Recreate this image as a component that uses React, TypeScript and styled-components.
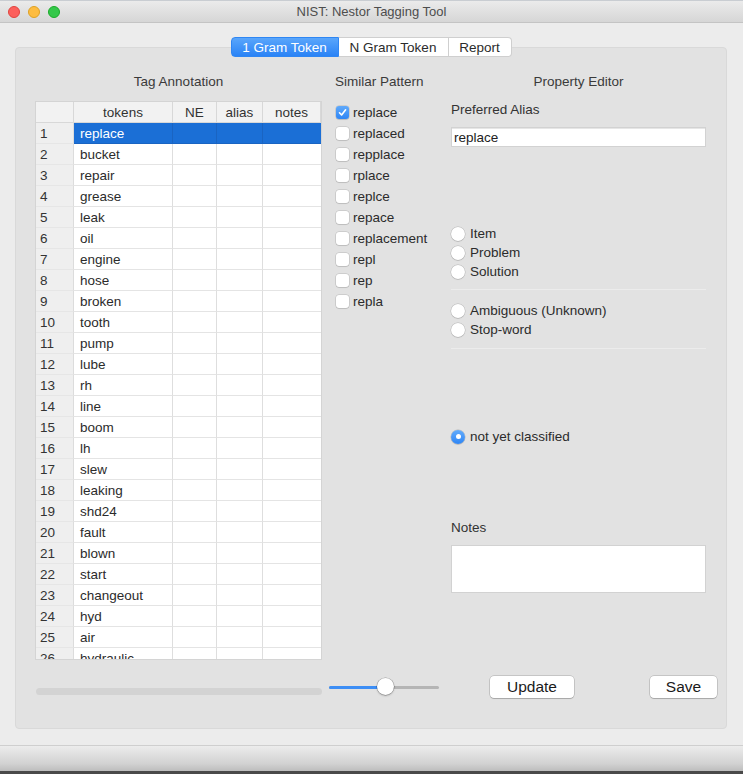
import React from "react";
import styled, { createGlobalStyle, css } from "styled-components";

const GlobalStyle = createGlobalStyle`
  html, body { margin: 0; padding: 0; background: #ececec; }
  body { font-family: "Liberation Sans", Arial, sans-serif; font-size: 13.5px; color: #2b2b2b; }
  * { box-sizing: border-box; }
`;

const Window = styled.div`
  width: 743px;
  height: 774px;
  display: flex;
  flex-direction: column;
  background: #ececec;
  overflow: hidden;
`;

const TitleBar = styled.div`
  height: 23px;
  flex: none;
  display: flex;
  align-items: center;
  position: relative;
  background: linear-gradient(#ebebeb, #d6d6d6);
  border-top: 1px solid #c9cdd2;
  border-bottom: 1px solid #c4c4c4;
`;

const Lights = styled.div`
  display: flex;
  gap: 8px;
  padding-left: 8px;
`;

const Light = styled.span<{ $c: string; $b: string }>`
  width: 12px;
  height: 12px;
  border-radius: 50%;
  background: ${(p) => p.$c};
  border: 1px solid ${(p) => p.$b};
`;

const Title = styled.div`
  position: absolute;
  left: 0;
  right: 0;
  text-align: center;
  font-size: 13px;
  color: #4d4d4d;
  pointer-events: none;
`;

const Body = styled.div`
  flex: 1;
  padding: 14px 16px 16px 15px;
  display: flex;
  flex-direction: column;
`;

const TabBar = styled.div`
  display: flex;
  justify-content: center;
  margin-bottom: -10px;
  position: relative;
  z-index: 1;
`;

const Tab = styled.div<{ $active?: boolean; $w: number }>`
  width: ${(p) => p.$w}px;
  height: 20px;
  display: flex;
  align-items: center;
  justify-content: center;
  font-size: 13.5px;
  background: #fff;
  color: #2b2b2b;
  border: 1px solid #cfcfcf;
  border-left: none;
  &:first-child { border-radius: 4px 0 0 4px; border-left: 1px solid #cfcfcf; }
  &:last-child { border-radius: 0 4px 4px 0; }
  ${(p) =>
    p.$active &&
    css`
      background: linear-gradient(#5aa6fb, #2a83f6);
      color: #fff;
      border-color: #2f86f3 !important;
    `}
`;

const Pane = styled.div`
  height: 682px;
  background: #e2e2e2;
  border: 1px solid #d9d9d9;
  border-radius: 4px;
  padding: 26px 9px 30px 19px;
  display: flex;
  flex-direction: column;
`;

const Columns = styled.div`
  display: grid;
  grid-template-columns: 287px 105px 255px;
  column-gap: 12px;
  align-items: start;
  & > :nth-child(2) { margin-left: 1px; }
`;

const Column = styled.div`
  display: flex;
  flex-direction: column;
`;

const SectionTitle = styled.div<{ $center?: boolean }>`
  height: 16px;
  line-height: 16px;
  color: #3a3a3a;
  white-space: nowrap;
  text-align: ${(p) => (p.$center ? "center" : "left")};
`;

const Table = styled.div`
  margin-top: 11px;
  height: 559px;
  overflow: hidden;
  background: #fff;
  border: 1px solid #d4d4d4;
  display: grid;
  grid-template-columns: 38px 99px 44px 46px 58px;
  grid-auto-rows: 21px;
  align-content: start;
`;

const HeadCell = styled.div`
  background: #f2f2f2;
  border-right: 1px solid #d8d8d8;
  border-bottom: 1px solid #d8d8d8;
  display: flex;
  align-items: center;
  justify-content: center;
  color: #333;
  &:last-child { border-right: none; }
`;

const RowNum = styled.div`
  background: #efefef;
  border-right: 1px solid #dcdcdc;
  border-bottom: 1px solid #e6e6e6;
  display: flex;
  align-items: center;
  padding-left: 4px;
  color: #333;
`;

const Cell = styled.div<{ $sel?: boolean; $last?: boolean }>`
  border-right: ${(p) => (p.$last ? "none" : "1px solid #dedede")};
  border-bottom: 1px solid #e4e4e4;
  display: flex;
  align-items: center;
  padding-left: 6px;
  color: #2b2b2b;
  white-space: nowrap;
  ${(p) =>
    p.$sel &&
    css`
      background: #1b6fd6;
      color: #fff;
      border-right-color: #1a64c2;
      border-bottom-color: #1a64c2;
    `}
`;

const CheckList = styled.div`
  margin-top: 12px;
  display: flex;
  flex-direction: column;
`;

const CheckItem = styled.div`
  height: 21px;
  display: flex;
  align-items: center;
  gap: 4px;
  padding-left: 1px;
  color: #2b2b2b;
  white-space: nowrap;
`;

const Box = styled.span<{ $on?: boolean }>`
  flex: none;
  width: 13px;
  height: 13px;
  border-radius: 3px;
  background: ${(p) => (p.$on ? "linear-gradient(#5fa9fb, #2f86f5)" : "#fff")};
  box-shadow: 0 0 0 0.5px rgba(0, 0, 0, 0.18), 0 1px 1px rgba(0, 0, 0, 0.08);
  display: flex;
  align-items: center;
  justify-content: center;
`;

const Editor = styled.div`
  margin-top: 12px;
  display: flex;
  flex-direction: column;
`;

const FieldLabel = styled.div<{ $gap?: number }>`
  height: 16px;
  line-height: 16px;
  color: #333;
  margin-top: ${(p) => p.$gap ?? 0}px;
`;

const TextInput = styled.div`
  margin-top: 9px;
  height: 20px;
  background: #fff;
  border: 1px solid #d2d2d2;
  box-shadow: inset 0 1px 0 #e6e6e6;
  padding-left: 2px;
  display: flex;
  align-items: center;
  color: #222;
`;

const RadioGroup = styled.div<{ $gap: number }>`
  margin-top: ${(p) => p.$gap}px;
  display: flex;
  flex-direction: column;
`;

const RadioItem = styled.div`
  height: 19px;
  display: flex;
  align-items: center;
  gap: 5px;
  color: #2b2b2b;
`;

const RadioDot = styled.span<{ $on?: boolean }>`
  flex: none;
  width: 14px;
  height: 14px;
  border-radius: 50%;
  background: ${(p) => (p.$on ? "linear-gradient(#62abfb, #2f86f5)" : "#fff")};
  box-shadow: 0 0 0 0.5px rgba(0, 0, 0, 0.2), 0 1px 1px rgba(0, 0, 0, 0.08);
  display: flex;
  align-items: center;
  justify-content: center;
  &::after {
    content: "";
    display: ${(p) => (p.$on ? "block" : "none")};
    width: 5px;
    height: 5px;
    border-radius: 50%;
    background: #fff;
  }
`;

const Separator = styled.div<{ $gap: number }>`
  margin-top: ${(p) => p.$gap}px;
  height: 1px;
  background: #d6d6d6;
  border-bottom: 1px solid #ececec;
`;

const NotesBox = styled.div`
  margin-top: 9px;
  height: 48px;
  background: #fff;
  border: 1px solid #d2d2d2;
`;

const BottomRow = styled.div`
  margin-top: 16px;
  height: 22px;
  display: flex;
  align-items: center;
`;

const ScrollTrack = styled.div`
  margin-left: 1px;
  margin-top: 9px;
  width: 286px;
  height: 7px;
  border-radius: 4px;
  background: #d3d3d3;
`;

const Slider = styled.div`
  margin-left: 7px;
  width: 110px;
  height: 16px;
  position: relative;
  display: flex;
  align-items: center;
`;

const SliderTrack = styled.div`
  width: 100%;
  height: 3px;
  border-radius: 2px;
  background: #b5b5b5;
  overflow: hidden;
`;

const SliderFill = styled.div`
  height: 100%;
  background: #3d8ef5;
`;

const SliderThumb = styled.div`
  position: absolute;
  top: -1px;
  width: 17px;
  height: 17px;
  margin-left: -8px;
  border-radius: 50%;
  background: #fff;
  box-shadow: 0 0 0 0.5px rgba(0, 0, 0, 0.3), 0 1px 2px rgba(0, 0, 0, 0.25);
`;

const Button = styled.div<{ $w: number; $gap: number }>`
  margin-left: ${(p) => p.$gap}px;
  width: ${(p) => p.$w}px;
  height: 22px;
  border-radius: 4px;
  background: #fff;
  box-shadow: 0 0 0 0.5px rgba(0, 0, 0, 0.25), 0 1px 1px rgba(0, 0, 0, 0.15);
  display: flex;
  align-items: center;
  justify-content: center;
  font-size: 15.5px;
  color: #1a1a1a;
`;

const StatusBar = styled.div`
  height: 29px;
  flex: none;
  border-top: 1px solid #cfcfcf;
  background: linear-gradient(#ececec, #d2d2d2 70%, #bdbdbd);
  border-bottom: 3px solid #4a4a4a;
`;

const tokens = [
  "replace", "bucket", "repair", "grease", "leak", "oil", "engine", "hose",
  "broken", "tooth", "pump", "lube", "rh", "line", "boom", "lh", "slew",
  "leaking", "shd24", "fault", "blown", "start", "changeout", "hyd", "air",
  "hydraulic",
];

const patterns = [
  "replace", "replaced", "repplace", "rplace", "replce", "repace",
  "replacement", "repl", "rep", "repla",
];

export default function App() {
  const sliderPos = 51;
  return (
    <>
      <GlobalStyle />
      <Window>
        <TitleBar>
          <Lights>
            <Light $c="#fc605c" $b="#e0443e" />
            <Light $c="#fdbc40" $b="#dea123" />
            <Light $c="#34c84a" $b="#1aab29" />
          </Lights>
          <Title>NIST: Nestor Tagging Tool</Title>
        </TitleBar>
        <Body>
          <TabBar>
            <Tab $active $w={108}>1 Gram Token</Tab>
            <Tab $w={110}>N Gram Token</Tab>
            <Tab $w={63}>Report</Tab>
          </TabBar>
          <Pane>
            <Columns>
              <Column>
                <SectionTitle $center>Tag Annotation</SectionTitle>
                <Table>
                  <HeadCell />
                  <HeadCell>tokens</HeadCell>
                  <HeadCell>NE</HeadCell>
                  <HeadCell>alias</HeadCell>
                  <HeadCell>notes</HeadCell>
                  {tokens.map((t, i) => (
                    <React.Fragment key={t}>
                      <RowNum>{i + 1}</RowNum>
                      <Cell $sel={i === 0}>{t}</Cell>
                      <Cell $sel={i === 0} />
                      <Cell $sel={i === 0} />
                      <Cell $sel={i === 0} $last />
                    </React.Fragment>
                  ))}
                </Table>
              </Column>
              <Column>
                <SectionTitle>Similar Pattern</SectionTitle>
                <CheckList>
                  {patterns.map((p, i) => (
                    <CheckItem key={p}>
                      <Box $on={i === 0}>
                        {i === 0 && (
                          <svg width="9" height="9" viewBox="0 0 9 9">
                            <path d="M1.5 4.8 L3.6 7 L7.6 1.8" fill="none" stroke="#fff" strokeWidth="1.6" strokeLinecap="round" strokeLinejoin="round" />
                          </svg>
                        )}
                      </Box>
                      {p}
                    </CheckItem>
                  ))}
                </CheckList>
              </Column>
              <Column>
                <SectionTitle $center>Property Editor</SectionTitle>
                <Editor>
                  <FieldLabel>Preferred Alias</FieldLabel>
                  <TextInput>replace</TextInput>
                  <RadioGroup $gap={77}>
                    <RadioItem><RadioDot />Item</RadioItem>
                    <RadioItem><RadioDot />Problem</RadioItem>
                    <RadioItem><RadioDot />Solution</RadioItem>
                  </RadioGroup>
                  <Separator $gap={8} />
                  <RadioGroup $gap={11}>
                    <RadioItem><RadioDot />Ambiguous (Unknown)</RadioItem>
                    <RadioItem><RadioDot />Stop-word</RadioItem>
                  </RadioGroup>
                  <Separator $gap={9} />
                  <RadioGroup $gap={78}>
                    <RadioItem><RadioDot $on />not yet classified</RadioItem>
                  </RadioGroup>
                  <FieldLabel $gap={74}>Notes</FieldLabel>
                  <NotesBox />
                </Editor>
              </Column>
            </Columns>
            <BottomRow>
              <ScrollTrack />
              <Slider>
                <SliderTrack>
                  <SliderFill style={{ width: `${sliderPos}%` }} />
                </SliderTrack>
                <SliderThumb style={{ left: `${sliderPos}%` }} />
              </Slider>
              <Button $w={84} $gap={51}>Update</Button>
              <Button $w={67} $gap={76}>Save</Button>
            </BottomRow>
          </Pane>
        </Body>
        <StatusBar />
      </Window>
    </>
  );
}
